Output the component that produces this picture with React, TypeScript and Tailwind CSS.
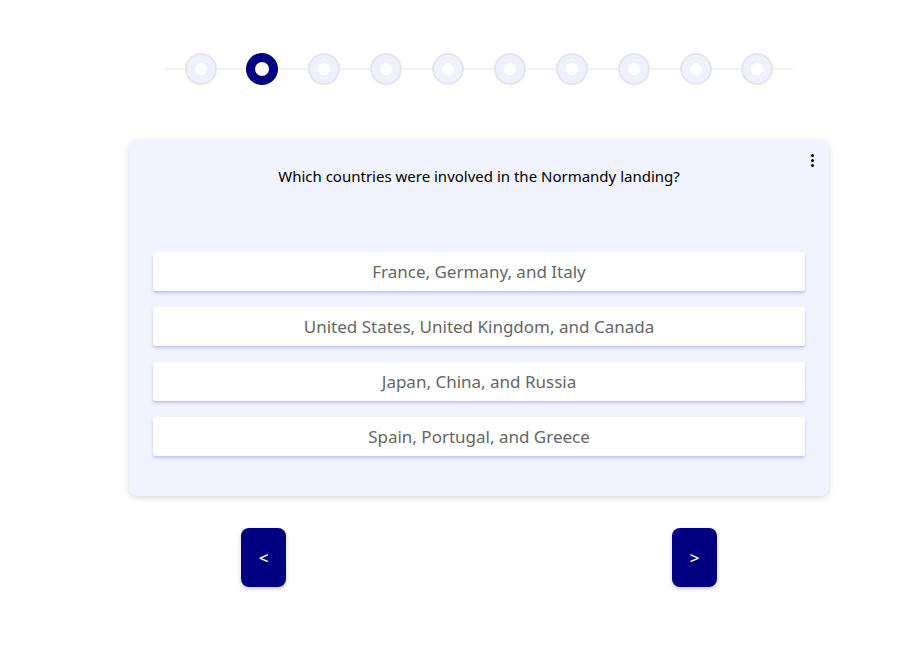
import React, { useState } from 'react';

const options = [
  'France, Germany, and Italy',
  'United States, United Kingdom, and Canada',
  'Japan, China, and Russia',
  'Spain, Portugal, and Greece',
];

const App: React.FC = () => {
  const [step, setStep] = useState(1);
  const total = 10;

  return (
    <div className="min-h-screen bg-white pl-[45px]" style={{ fontFamily: '"Segoe UI", "Noto Sans", sans-serif' }}>
      {/* Stepper */}
      <div className="pt-[53px] flex justify-center">
        <div className="relative w-[627px] px-[19px] flex justify-between">
          <div className="absolute left-0 right-0 top-1/2 h-[2px] -mt-px bg-[#eff1fc]"></div>
          {Array.from({ length: total }).map((_, i) => (
            <div
              key={i}
              className={
                i === step
                  ? 'relative z-10 w-8 h-8 rounded-full bg-[#000080] flex items-center justify-center'
                  : 'relative z-10 w-8 h-8 rounded-full bg-[#eff1fd] border-2 border-[#e4e5ef] flex items-center justify-center'
              }
            >
              <div className={i === step ? 'w-[14px] h-[14px] rounded-full bg-white' : 'w-3 h-3 rounded-full bg-white'}></div>
            </div>
          ))}
        </div>
      </div>

      {/* Question card */}
      <div className="mt-[55px] flex justify-center">
        <div className="relative w-[700px] bg-[#f1f3fe] rounded-lg shadow-[0_2px_6px_rgba(0,0,0,0.15)] px-6 pt-[26px] pb-[40px]">
          <button className="absolute right-[9px] top-[12px] w-4 h-4 flex flex-col items-center justify-center gap-[2px]">
            <span className="w-[3px] h-[3px] rounded-full bg-black"></span>
            <span className="w-[3px] h-[3px] rounded-full bg-black"></span>
            <span className="w-[3px] h-[3px] rounded-full bg-black"></span>
          </button>
          <p className="text-center text-[15px] text-black leading-5">Which countries were involved in the Normandy landing?</p>

          <div className="mt-[66px] flex flex-col gap-4">
            {options.map((o) => (
              <button
                key={o}
                className="h-[39px] w-full bg-white rounded-[3px] text-[17px] text-[#666] shadow-[0_2px_3px_rgba(99,102,241,0.35)]"
              >
                {o}
              </button>
            ))}
          </div>
        </div>
      </div>

      {/* Navigation */}
      <div className="mt-[32px] flex justify-center">
        <div className="w-[476px] flex justify-between">
          <button
            onClick={() => setStep(Math.max(0, step - 1))}
            className="w-[45px] h-[59px] rounded-lg bg-[#000080] text-white text-[17px] font-medium shadow-[0_2px_4px_rgba(0,0,0,0.2)]"
          >
            &lt;
          </button>
          <button
            onClick={() => setStep(Math.min(total - 1, step + 1))}
            className="w-[45px] h-[59px] rounded-lg bg-[#000080] text-white text-[17px] font-medium shadow-[0_2px_4px_rgba(0,0,0,0.2)]"
          >
            &gt;
          </button>
        </div>
      </div>
    </div>
  );
};

export default App;
